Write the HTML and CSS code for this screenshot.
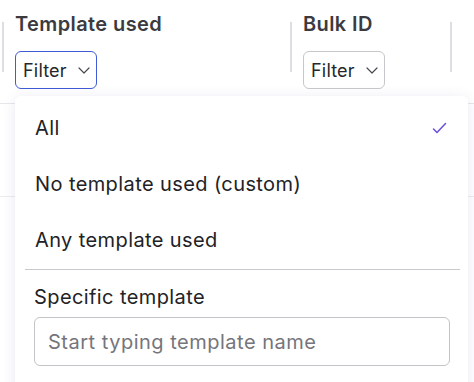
FILE: index.html
```html
<!DOCTYPE html>
<html lang="en">
<head>
<meta charset="utf-8">
<title>Template filter</title>
<link rel="stylesheet" href="styles.css">
</head>
<body>
<div class="table">
  <div class="head">
    <div class="sep sep-first"></div>
    <div class="col col-template">
      <div class="col-title">Template used</div>
      <button class="filter filter-active">Filter
        <svg class="chev" width="12" height="7" viewBox="0 0 12 7"><path d="M1 1l5 5 5-5" fill="none" stroke="#4a4a4f" stroke-width="1.2" stroke-linecap="round" stroke-linejoin="round"/></svg>
      </button>
    </div>
    <div class="sep"></div>
    <div class="col col-bulk">
      <div class="col-title">Bulk ID</div>
      <button class="filter">Filter
        <svg class="chev" width="12" height="7" viewBox="0 0 12 7"><path d="M1 1l5 5 5-5" fill="none" stroke="#4a4a4f" stroke-width="1.2" stroke-linecap="round" stroke-linejoin="round"/></svg>
      </button>
    </div>
    <div class="sep"></div>
  </div>
  <div class="row"></div>

  <div class="menu">
    <div class="item">
      <span>All</span>
      <svg class="check" width="15" height="12" viewBox="0 0 15 12"><path d="M1.5 7l3.5 3.5 8.5-9" fill="none" stroke="#6b4fd8" stroke-width="1.5" stroke-linecap="round" stroke-linejoin="round"/></svg>
    </div>
    <div class="item"><span>No template used (custom)</span></div>
    <div class="item"><span>Any template used</span></div>
    <div class="divider"></div>
    <div class="specific">
      <div class="label">Specific template</div>
      <input class="search" type="text" placeholder="Start typing template name">
    </div>
  </div>
</div>
</body>
</html>
```

FILE: styles.css
```css
html, body {
  margin: 0;
  padding: 0;
  background: #ffffff;
  font-family: Inter, "Noto Sans", "Liberation Sans", sans-serif;
  color: #222226;
}

.table {
  position: relative;
  width: 474px;
  height: 382px;
  overflow: hidden;
}

.head {
  display: flex;
  border-bottom: 1px solid #e7e7ea;
  box-sizing: border-box;
  height: 104px;
}

.sep {
  width: 2px;
  height: 50px;
  margin-top: 22px;
  background: #dedee2;
  flex: none;
}

.sep-first {
  margin-left: 2px;
}

.col {
  padding-left: 11px;
  padding-top: 12px;
  box-sizing: border-box;
  flex: none;
}

.col-template {
  width: 286px;
}

.col-bulk {
  width: 158px;
}

.col-title {
  font-size: 20px;
  font-weight: 600;
  line-height: 24px;
  color: #3b3b3f;
  letter-spacing: 0.4px;
}

.filter {
  margin-top: 15px;
  display: flex;
  align-items: center;
  gap: 11px;
  height: 38px;
  width: 82px;
  padding: 0 0 0 7px;
  box-sizing: border-box;
  border: 1px solid #c7c7cb;
  border-radius: 6px;
  background: #ffffff;
  font-family: Inter, "Noto Sans", sans-serif;
  font-size: 18px;
  letter-spacing: 0.2px;
  color: #27272b;
}

.filter-active {
  border-color: #3f5bd6;
}

.chev {
  display: block;
  margin-top: 1px;
}

.row {
  height: 92px;
  border-bottom: 1px solid #ececef;
}

.menu {
  position: absolute;
  left: 15px;
  top: 96px;
  width: 453px;
  padding-top: 4px;
  background: #ffffff;
  border-radius: 6px;
  box-shadow: 0 2px 14px rgba(70, 60, 150, 0.12);
  height: 320px;
}

.item {
  display: flex;
  align-items: center;
  justify-content: space-between;
  height: 56px;
  padding: 0 21px 0 20px;
  font-size: 20px;
  line-height: 24px;
  letter-spacing: 0.4px;
  color: #222226;
}

.check {
  display: block;
}

.divider {
  height: 1px;
  background: #c9c9cd;
  margin: 1px 8px 0 10px;
}

.specific {
  padding: 15px 18px 0 19px;
}

.label {
  font-size: 20px;
  line-height: 24px;
  letter-spacing: 0.4px;
  color: #222226;
}

.search {
  display: block;
  margin-top: 8px;
  width: 416px;
  height: 49px;
  box-sizing: border-box;
  border: 1px solid #c4c4c8;
  border-radius: 6px;
  padding: 0 13px;
  font-family: Inter, "Noto Sans", sans-serif;
  font-size: 20px;
  letter-spacing: 0.5px;
  color: #222226;
  background: #ffffff;
  outline: none;
}

.search::placeholder {
  color: #75757b;
}
```
